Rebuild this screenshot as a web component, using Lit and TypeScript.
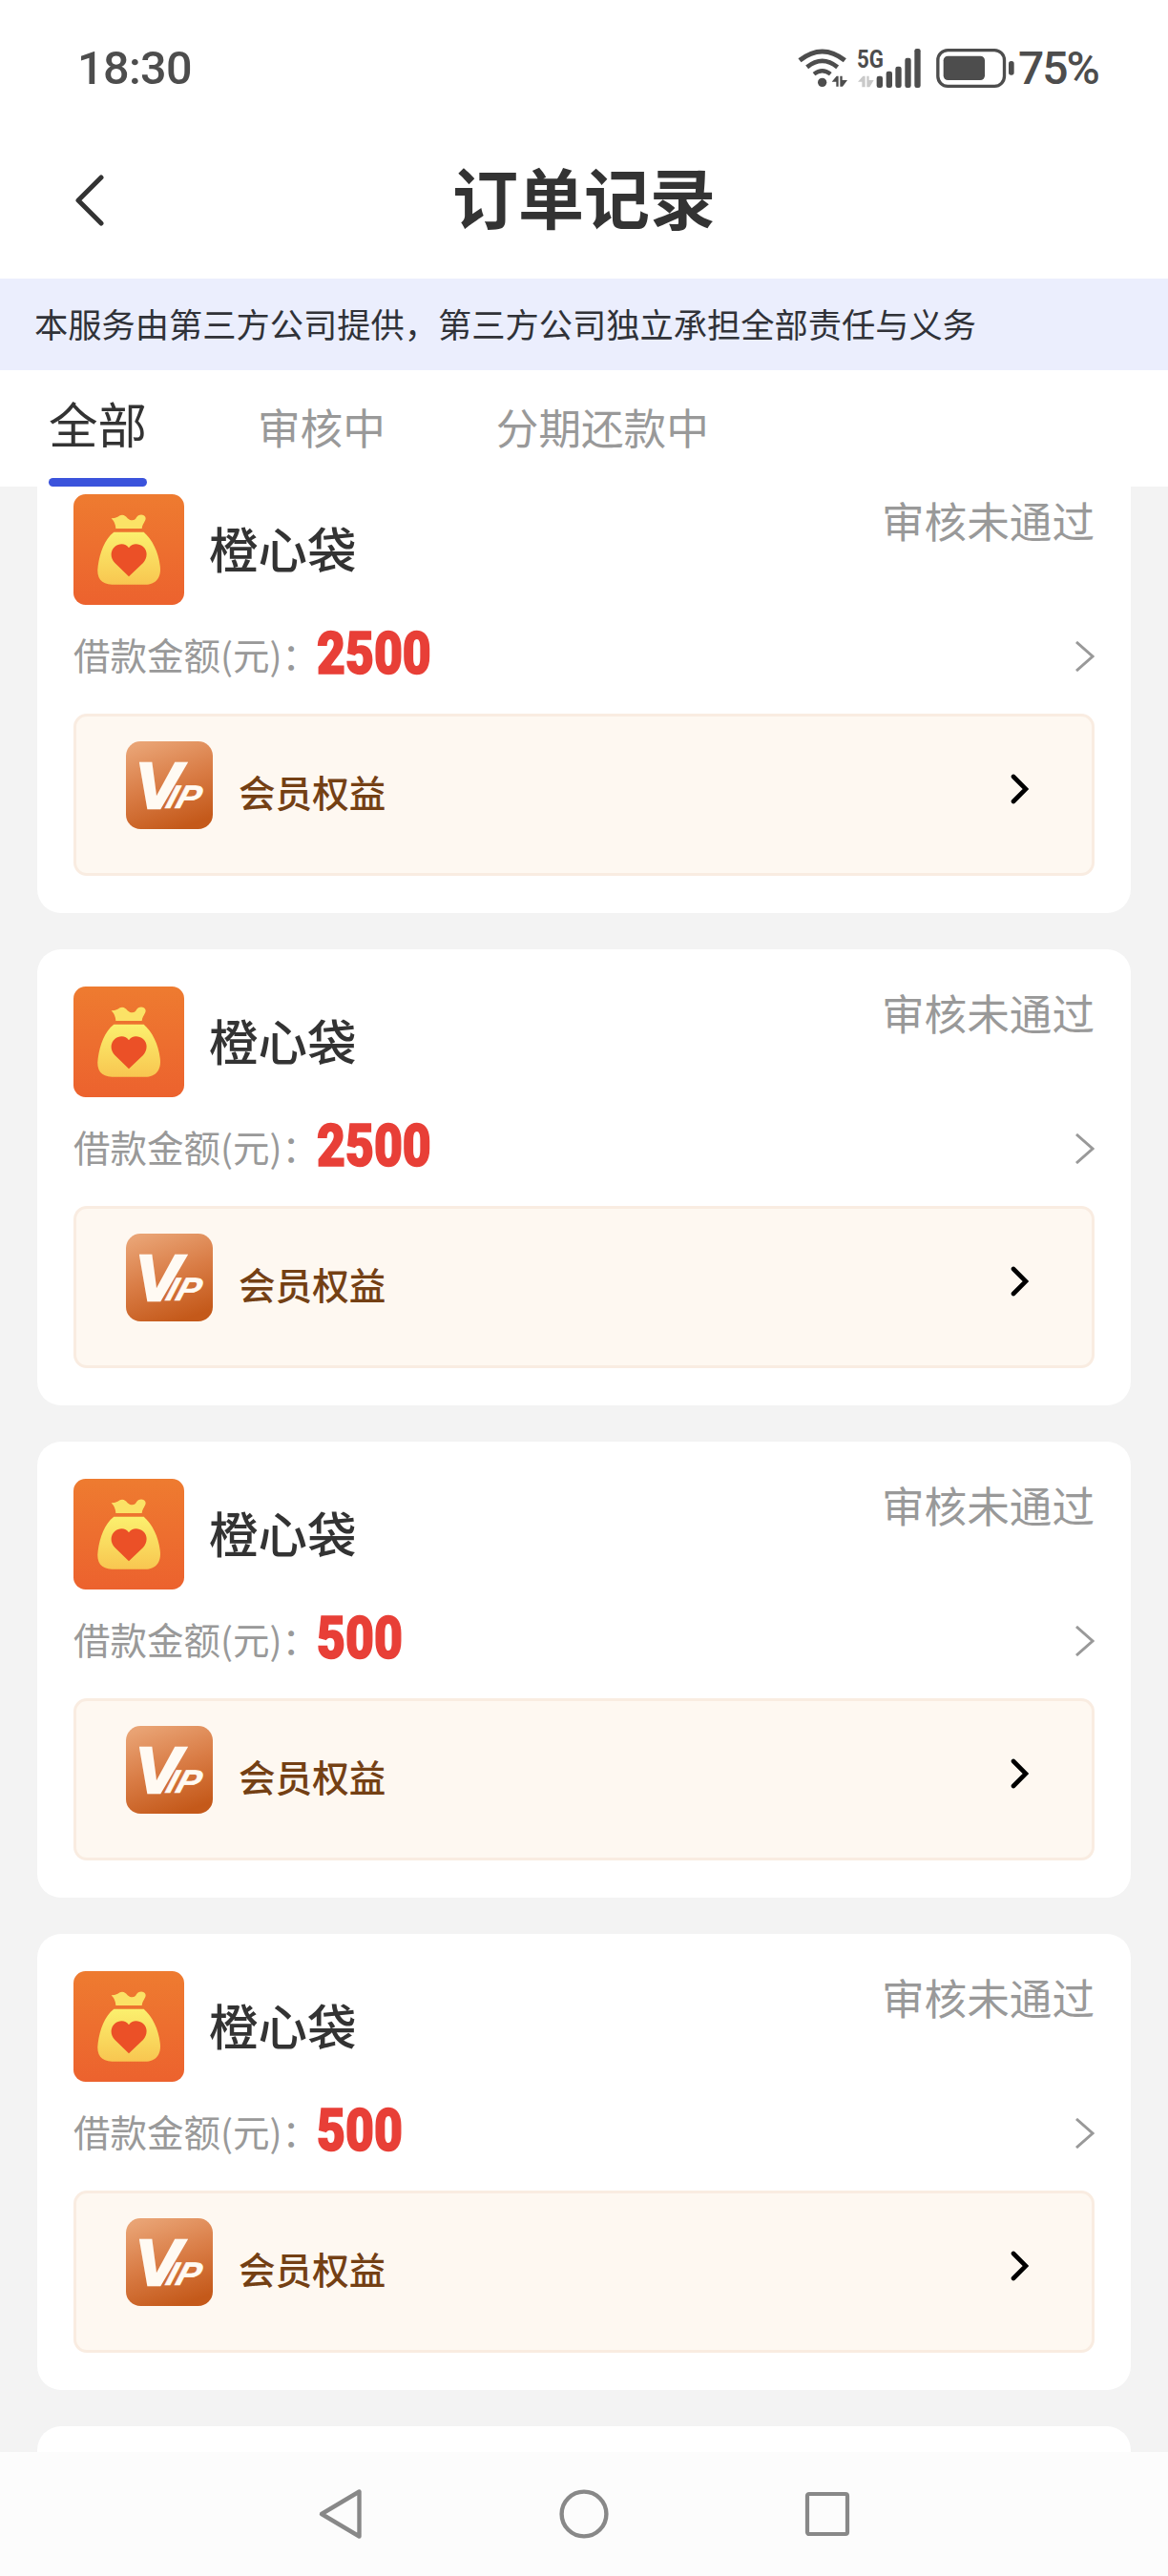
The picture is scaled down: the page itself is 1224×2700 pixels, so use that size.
import { LitElement, html, css } from "lit";
import { customElement, property } from "lit/decorators.js";

interface Order {
  name: string;
  amount: string;
  status: string;
}

const ORDERS: Order[] = [
  { name: "橙心袋", amount: "2500", status: "审核未通过" },
  { name: "橙心袋", amount: "2500", status: "审核未通过" },
  { name: "橙心袋", amount: "500", status: "审核未通过" },
  { name: "橙心袋", amount: "500", status: "审核未通过" },
];

@customElement("status-bar")
class StatusBar extends LitElement {
  static styles = css`
    :host {
      display: flex;
      justify-content: space-between;
      align-items: center;
      box-sizing: border-box;
      height: 118px;
      padding: 24px 72px 0 81px;
      color: #4d4d4d;
      font: 500 48.5px/56px Roboto, sans-serif;
    }
    .time {
      margin-top: 2px;
      letter-spacing: -0.6px;
    }
    .right {
      display: flex;
      align-items: center;
    }
    .wifi { margin-right: 4px; }
    .cell { margin-right: 16px; }
    .battery { margin-right: 4px; }
    .percent {
      width: 85px;
      margin-top: 2px;
      letter-spacing: -2px;
      font-size: 48px;
      white-space: nowrap;
    }
    svg { display: block; }
  `;

  render() {
    return html`
      <span class="time">18:30</span>
      <div class="right">
        <svg class="wifi" width="52" height="42" viewBox="105 87 156 126" fill="none" stroke="#4d4d4d">
          <path d="M111 127 Q182 71 253 127" stroke-width="15" />
          <path d="M134 148 Q182 109 230 148" stroke-width="14" />
          <path d="M156 170 Q182 149 208 170" stroke-width="13" />
          <circle cx="182" cy="196" r="14" fill="#4d4d4d" stroke="none" />
          <path d="M212 194 L227 176 H233 V209 H226 V194Z M238 176 H245 V189 H261 L246 209 H238Z" fill="#4d4d4d" stroke="none" />
        </svg>
        <svg class="cell" width="73" height="54" viewBox="276 69 219 162" fill="#4d4d4d">
          <text x="294" y="150" font-family="Roboto, sans-serif" font-weight="700" font-size="80" textLength="84" lengthAdjust="spacingAndGlyphs">5G</text>
          <path d="M297 194 L313 176 H320 V211 H310 V194Z M325 176 H332 V189 H347 L334 211 H325Z" fill="#c9c9c9" />
          <rect x="356" y="176" width="19" height="37" rx="7" />
          <rect x="386" y="161" width="19" height="52" rx="7" />
          <rect x="415" y="146" width="19" height="67" rx="7" />
          <rect x="445" y="119" width="19" height="94" rx="7" />
          <rect x="475" y="90" width="19" height="123" rx="7" />
        </svg>
        <svg class="battery" width="82" height="42" viewBox="543 87 246 126" fill="#4d4d4d">
          <rect x="548.5" y="95" width="209" height="113" rx="31" fill="none" stroke="#4d4d4d" stroke-width="10" />
          <rect x="566" y="113" width="130" height="76" rx="14" />
          <rect x="771" y="129" width="17" height="44" rx="8" />
        </svg>
        <span class="percent">75%</span>
      </div>
    `;
  }
}

@customElement("order-card")
class OrderCard extends LitElement {
  @property({ attribute: false }) order?: Order;

  static styles = css`
    :host {
      display: block;
      flex: none;
      box-sizing: border-box;
      height: 478px;
      padding: 39px 38px;
      border-radius: 25px;
      background: #fff;
      font-family: "Noto Sans CJK SC", sans-serif;
    }
    svg { display: block; flex: none; }
    .head {
      display: flex;
      height: 116px;
    }
    .name {
      flex: 1;
      margin-left: 26px;
      font-size: 51.5px;
      font-weight: 500;
      line-height: 111px;
      color: #333;
    }
    .status {
      font-size: 44.6px;
      line-height: 53px;
      color: #999;
    }
    .amount-row {
      display: flex;
      align-items: center;
      height: 108px;
      box-sizing: border-box;
    }
    .label {
      width: 255px;
      font-size: 38.5px;
      line-height: 56px;
      margin-bottom: 6px;
      color: #999;
      white-space: nowrap;
    }
    .amount {
      flex: 1;
      font: 900 61.5px/70px Roboto, sans-serif;
      color: #e83f37;
      -webkit-text-stroke: 1.6px #e83f37;
      margin-bottom: 7px;
      transform: scaleX(0.84);
      transform-origin: 0 50%;
    }
    .benefit {
      display: flex;
      align-items: flex-start;
      box-sizing: border-box;
      height: 170px;
      margin-top: 6px;
      padding: 26px 66px 0 52px;
      border: 3px solid #f9ece1;
      border-radius: 14px;
      background: #fef8f1;
    }
    .benefit-name {
      flex: 1;
      margin: 24px 0 0 27px;
      font-size: 38.6px;
      font-weight: 500;
      line-height: 56px;
      color: #744014;
    }
    .benefit-go { margin-top: 34px; }
  `;

  render() {
    if (!this.order) return null;
    const { name, amount, status } = this.order;
    return html`
      <div class="head">
        <svg width="116" height="116" viewBox="111 150 348 348">
          <defs>
            <linearGradient id="tile" x1="0" y1="0" x2="0" y2="1">
              <stop offset="0" stop-color="#ee7b30" />
              <stop offset="1" stop-color="#ec622e" />
            </linearGradient>
            <linearGradient id="bag" x1="0" y1="0" x2="0" y2="1">
              <stop offset="0" stop-color="#fbf06e" />
              <stop offset="1" stop-color="#f8c650" />
            </linearGradient>
          </defs>
          <rect x="111" y="150" width="348" height="348" rx="38" fill="url(#tile)" />
          <path d="M230 226 Q240 226 250 221 Q263 211 274 219 C283 226 285 232 296 232 C308 232 307 222 315 217 C328 209 342 220 337 231 C332 242 327 247 326 258 H244 Q243 239 230 226Z" fill="#fbe266" />
          <path d="M238 269 H332 C359 292 378 332 383 374 C389 414 367 434 338 434 H232 C199 434 182 414 188 376 C194 333 209 291 238 269Z" fill="url(#bag)" />
          <path d="M285 409 L241 366 C226 350 226 328 241 315 C255 303 276 304 285 319 C294 304 315 303 330 315 C345 328 344 350 330 366Z" fill="#eb5027" />
        </svg>
        <div class="name">${name}</div>
        <div class="status">${status}</div>
      </div>
      <div class="amount-row">
        <span class="label">借款金额(元)：</span>
        <span class="amount">${amount}</span>
        <svg width="20" height="32" viewBox="0 0 20 32" fill="none" stroke="#999" stroke-width="3">
          <path d="M1 1 L18 16 L1 31" />
        </svg>
      </div>
      <div class="benefit">
        <svg width="91" height="92" viewBox="276 141 273 276">
          <defs>
            <linearGradient id="vip" x1="0.25" y1="0" x2="0.6" y2="1">
              <stop offset="0" stop-color="#e9a374" />
              <stop offset="0.5" stop-color="#d97c45" />
              <stop offset="1" stop-color="#c4591a" />
            </linearGradient>
          </defs>
          <rect x="276" y="141" width="273" height="276" rx="46" fill="url(#vip)" />
          <g fill="#fffaf3" stroke="#fffaf3" font-family="Liberation Sans, sans-serif" font-weight="700" font-style="italic">
            <rect x="321" y="207" width="26" height="11" stroke="none" />
            <text transform="translate(304 350)" font-size="204" stroke-width="7" textLength="146" lengthAdjust="spacingAndGlyphs">V</text>
            <text transform="translate(397 352) skewX(-17)" font-size="102" stroke-width="2" textLength="104" lengthAdjust="spacingAndGlyphs">IP</text>
          </g>
        </svg>
        <div class="benefit-name">会员权益</div>
        <svg class="benefit-go" width="20" height="32" viewBox="0 0 20 32" fill="none" stroke="#000" stroke-width="4.6" stroke-linecap="round">
          <path d="M4 3 L17 16 L4 29" />
        </svg>
      </div>
    `;
  }
}

@customElement("app-root")
class AppRoot extends LitElement {
  static styles = css`
    :host {
      display: flex;
      flex-direction: column;
      width: 1224px;
      height: 2700px;
      overflow: hidden;
      background: #fff;
      font-family: "Noto Sans CJK SC", sans-serif;
      color: #333;
    }
    svg { display: block; }
    .header {
      display: grid;
      grid-template-columns: 120px 1fr 120px;
      align-items: center;
      height: 174px;
    }
    .back { margin: 9px 0 0 78px; }
    .title {
      text-align: center;
      font-size: 69px;
      font-weight: 700;
      line-height: 100px;
    }
    .notice {
      height: 96px;
      box-sizing: border-box;
      padding-left: 36px;
      background: #ebeefd;
      color: #303238;
      font-size: 35.25px;
      line-height: 94px;
      white-space: nowrap;
    }
    .tabs {
      display: flex;
      gap: 116px;
      height: 122px;
      box-sizing: border-box;
      padding-left: 51px;
    }
    .tab {
      font-size: 44.6px;
      line-height: 117px;
      color: #999;
    }
    .tab.active {
      display: flex;
      flex-direction: column;
      justify-content: space-between;
      font-size: 51.5px;
      line-height: 110px;
      color: #333;
    }
    .tab.active::after {
      content: "";
      flex: none;
      height: 9px;
      border-radius: 5px;
      background: #3b53dc;
    }
    .list {
      flex: 1;
      min-height: 0;
      overflow: hidden;
      background: #f3f3f3;
    }
    .cards {
      display: flex;
      flex-direction: column;
      gap: 38px;
      margin: -31px 39px 0;
    }
    .peek {
      height: 120px;
      flex: none;
      border-radius: 25px;
      background: #fff;
    }
    .nav {
      display: flex;
      justify-content: space-between;
      box-sizing: border-box;
      height: 130px;
      padding: 38px 333px 0;
      background: #fcfcfc;
    }
  `;

  render() {
    return html`
      <status-bar></status-bar>
      <div class="header">
        <svg class="back" width="32" height="54" viewBox="0 0 32 54" fill="none" stroke="#333" stroke-width="5" stroke-linecap="round" stroke-linejoin="round">
          <path d="M28 3 L4 27 L28 51" />
        </svg>
        <div class="title">订单记录</div>
      </div>
      <div class="notice">本服务由第三方公司提供，第三方公司独立承担全部责任与义务</div>
      <div class="tabs">
        <div class="tab active">全部</div>
        <div class="tab">审核中</div>
        <div class="tab">分期还款中</div>
      </div>
      <div class="list">
        <div class="cards">
          ${ORDERS.map((order) => html`<order-card .order=${order}></order-card>`)}
          <div class="peek"></div>
        </div>
      </div>
      <div class="nav">
        <svg width="48" height="54" viewBox="0 0 48 54" fill="none" stroke="#888" stroke-width="4.4" stroke-linejoin="round">
          <path d="M43.5 3.5 V50.5 L4 27Z" />
        </svg>
        <svg width="54" height="54" viewBox="0 0 54 54" fill="none" stroke="#888" stroke-width="4.4">
          <circle cx="27" cy="27" r="23.4" />
        </svg>
        <svg width="48" height="54" viewBox="0 0 48 54" fill="none" stroke="#888" stroke-width="4.2">
          <rect x="3" y="6" width="42" height="42" rx="2" />
        </svg>
      </div>
    `;
  }
}
